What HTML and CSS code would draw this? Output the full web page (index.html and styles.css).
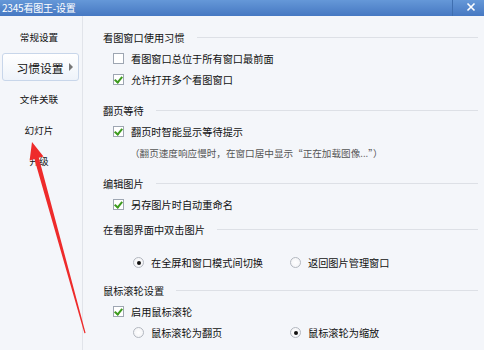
FILE: index.html
```html
<!DOCTYPE html>
<html lang="zh">
<head>
<meta charset="utf-8">
<link rel="stylesheet" href="styles.css">
</head>
<body>
<div class="window">
  <div class="titlebar">
    <span class="title">2345看图王-设置</span>
    <span class="sep"></span>
    <span class="close">
      <svg width="10" height="10" viewBox="0 0 10 10"><path d="M1.5 1.5 L8.5 8.5 M8.5 1.5 L1.5 8.5" stroke="#fff" stroke-width="1.6" fill="none"/></svg>
    </span>
  </div>
  <div class="main">
    <nav class="sidebar">
      <div class="nav-item">常规设置</div>
      <div class="nav-item active">习惯设置<span class="tri"></span></div>
      <div class="nav-item">文件关联</div>
      <div class="nav-item">幻灯片</div>
      <div class="nav-item">升级</div>
    </nav>
    <section class="content">
      <div class="head h1"><span>看图窗口使用习惯</span><i class="rule"></i></div>
      <div class="row check"><span class="cb"></span>看图窗口总位于所有窗口最前面</div>
      <div class="row check"><span class="cb on"></span>允许打开多个看图窗口</div>

      <div class="head gap10"><span>翻页等待</span><i class="rule"></i></div>
      <div class="row check"><span class="cb on"></span>翻页时智能显示等待提示</div>
      <div class="row note">（翻页速度响应慢时，在窗口居中显示“正在加载图像...”）</div>

      <div class="head gap10"><span>编辑图片</span><i class="rule"></i></div>
      <div class="row check"><span class="cb on"></span>另存图片时自动重命名</div>

      <div class="head gap4"><span>在看图界面中双击图片</span><i class="rule"></i></div>
      <div class="row radios gap12">
        <span class="opt"><span class="rd on"></span>在全屏和窗口模式间切换</span>
        <span class="opt"><span class="rd"></span>返回图片管理窗口</span>
      </div>

      <div class="head gap7"><span>鼠标滚轮设置</span><i class="rule"></i></div>
      <div class="row check"><span class="cb on"></span>启用鼠标滚轮</div>
      <div class="row radios">
        <span class="opt"><span class="rd"></span>鼠标滚轮为翻页</span>
        <span class="opt"><span class="rd on"></span>鼠标滚轮为缩放</span>
      </div>
    </section>
  </div>
  <svg class="arrow" width="484" height="350" viewBox="0 0 484 350">
    <polygon points="32,142 43.5,156.5 38.8,157.8 85.6,333 84.4,333.3 34.4,159 29.6,160.5" fill="#ee2b2b"/>
  </svg>
</div>
</body>
</html>
```
FILE: styles.css
```css
* { box-sizing: border-box; }
html, body { margin: 0; padding: 0; }
body {
  width: 484px;
  height: 350px;
  overflow: hidden;
  background: #f4f6fa;
  font-family: "Noto Sans CJK SC", "Noto Sans", sans-serif;
  color: #111;
}
.window { position: relative; width: 484px; height: 350px; }
.titlebar {
  height: 16px;
  background: linear-gradient(#6598d8, #4678c2);
  display: flex;
  align-items: center;
  color: #fff;
}
.title { font-size: 10px; padding-left: 2px; line-height: 16px; flex: 1; letter-spacing: -0.2px; }
.sep { width: 1px; height: 16px; background: #3f6fb0; margin-right: 13px; }
.close { width: 10px; height: 10px; margin-right: 8px; display: flex; margin-top: -2px; }
.main { display: flex; height: 334px; }
.sidebar {
  width: 83px;
  border-right: 1px solid #e1e4ea;
  padding-top: 5px;
  display: flex;
  flex-direction: column;
}
.nav-item {
  height: 31px;
  display: flex;
  align-items: center;
  justify-content: center;
  font-size: 9.6px;
  color: #111;
  padding-right: 4px;
}
.nav-item.active {
  margin: 1px 3px 2px 2px;
  height: 28px;
  border: 1px solid #c8d6ea;
  border-radius: 3px;
  background: linear-gradient(#ffffff, #eef3fa);
  font-size: 11.8px;
  padding-right: 0;
  padding-left: 8px;
  justify-content: center;
}
.tri {
  width: 0; height: 0;
  border-left: 4px solid #777;
  border-top: 4px solid transparent;
  border-bottom: 4px solid transparent;
  margin-left: 5px;
}
.content {
  flex: 1;
  padding: 11px 6px 0 20px;
  font-size: 10.2px;
  display: flex;
  flex-direction: column;
}
.head {
  height: 21px;
  display: flex;
  align-items: center;
  gap: 12px;
}
.rule { flex: 1; height: 1px; background: #dde0e6; }
.gap10 { margin-top: 10px; }
.gap4 { margin-top: 4px; }
.gap7 { margin-top: 7px; }
.gap12 { margin-top: 12px; }
.row { height: 21px; display: flex; align-items: center; }
.check { padding-left: 10px; }
.cb {
  width: 11px; height: 11px;
  border: 1px solid #9ea6b2;
  background: #fff;
  margin-right: 7px;
  position: relative;
}
.cb.on::after {
  content: "";
  position: absolute;
  left: 2px; top: 0px;
  width: 3px; height: 6px;
  border-right: 2px solid #3d9a1e;
  border-bottom: 2px solid #3d9a1e;
  transform: rotate(40deg);
}
.note { padding-left: 27px; color: #555; font-size: 9.6px; }
.radios { padding-left: 30px; }
.opt { display: flex; align-items: center; width: 157px; }
.rd {
  width: 11px; height: 11px;
  border-radius: 50%;
  border: 1px solid #b3b8c0;
  background: radial-gradient(#fff, #f0f1f4);
  margin-right: 7px;
  position: relative;
}
.rd.on::after {
  content: "";
  position: absolute;
  left: 2.5px; top: 2.5px;
  width: 4px; height: 4px;
  border-radius: 50%;
  background: #111;
}
.arrow { position: absolute; left: 0; top: 0; pointer-events: none; }
```
